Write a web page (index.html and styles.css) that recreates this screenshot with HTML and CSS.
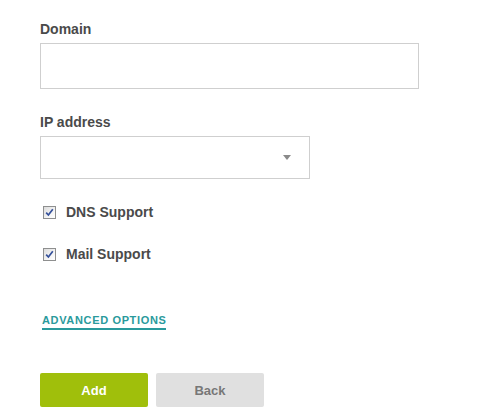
FILE: index.html
```html
<!DOCTYPE html>
<html>
<head>
<meta charset="utf-8">
<link rel="stylesheet" href="styles.css">
</head>
<body>
<form class="form">
  <div class="field">
    <label class="label">Domain</label>
    <input class="text-input" type="text">
  </div>
  <div class="field">
    <label class="label">IP address</label>
    <div class="select">
      <span class="caret"></span>
    </div>
  </div>
  <div class="checks">
    <label class="check">
      <input class="check-native" type="checkbox" checked>
      <span class="box"><svg width="9" height="9" viewBox="0 0 9 9"><path d="M1.2 4.6 L3.4 7 L7.8 1.3" fill="none" stroke="#34509a" stroke-width="1.7"/></svg></span>
      <span>DNS Support</span>
    </label>
    <label class="check">
      <input class="check-native" type="checkbox" checked>
      <span class="box"><svg width="9" height="9" viewBox="0 0 9 9"><path d="M1.2 4.6 L3.4 7 L7.8 1.3" fill="none" stroke="#34509a" stroke-width="1.7"/></svg></span>
      <span>Mail Support</span>
    </label>
  </div>
  <a class="advanced" href="#">ADVANCED OPTIONS</a>
  <div class="actions">
    <button type="button" class="btn btn-add">Add</button>
    <button type="button" class="btn btn-back">Back</button>
  </div>
</form>
</body>
</html>
```
FILE: styles.css
```css
html, body {
  margin: 0;
  padding: 0;
  background: #fff;
}
body {
  font-family: "Liberation Sans", Arial, sans-serif;
  color: #4a4a4a;
}
.form {
  display: flex;
  flex-direction: column;
  align-items: flex-start;
  padding: 21px 0 0 40px;
}
.field {
  display: flex;
  flex-direction: column;
  margin-bottom: 25px;
}
.label {
  font-size: 14px;
  font-weight: bold;
  line-height: 17px;
  color: #4a4a4a;
  margin-bottom: 5px;
}
.text-input {
  box-sizing: border-box;
  width: 379px;
  height: 46px;
  border: 1px solid #cfcfcf;
  margin: 0;
  padding: 0 10px;
  outline: none;
}
.select {
  box-sizing: border-box;
  width: 270px;
  height: 43px;
  border: 1px solid #cfcfcf;
  display: flex;
  align-items: center;
  justify-content: flex-end;
  padding-right: 18px;
}
.caret {
  width: 0;
  height: 0;
  border-left: 4px solid transparent;
  border-right: 4px solid transparent;
  border-top: 5px solid #8a8a8a;
}
.checks {
  display: flex;
  flex-direction: column;
  gap: 25px;
}
.check {
  display: flex;
  align-items: center;
  font-size: 14px;
  font-weight: bold;
  color: #4a4a4a;
  line-height: 17px;
}
.check-native {
  display: none;
}
.box {
  box-sizing: border-box;
  width: 13px;
  height: 13px;
  margin: 0 10px 0 3px;
  border: 1px solid #8e8f8f;
  background: linear-gradient(135deg, #dcdcdc 0%, #f4f4f4 60%, #ffffff 100%);
  display: flex;
  align-items: center;
  justify-content: center;
}
.box svg {
  display: block;
}
.advanced {
  margin-top: 51px;
  margin-left: 2px;
  font-size: 11px;
  font-weight: bold;
  letter-spacing: 0.65px;
  color: #2a9a9c;
  text-decoration: none;
  border-bottom: 2px solid #2a9a9c;
  padding-bottom: 1px;
  line-height: 13px;
}
.actions {
  display: flex;
  gap: 8px;
  margin-top: 43px;
}
.btn {
  width: 108px;
  height: 34px;
  border: none;
  border-radius: 2px;
  font-family: "Liberation Sans", Arial, sans-serif;
  font-size: 13px;
  font-weight: bold;
  cursor: pointer;
}
.btn-add {
  background: #a0bf0b;
  color: #fff;
}
.btn-back {
  background: #e0e0e0;
  color: #777;
}
```
